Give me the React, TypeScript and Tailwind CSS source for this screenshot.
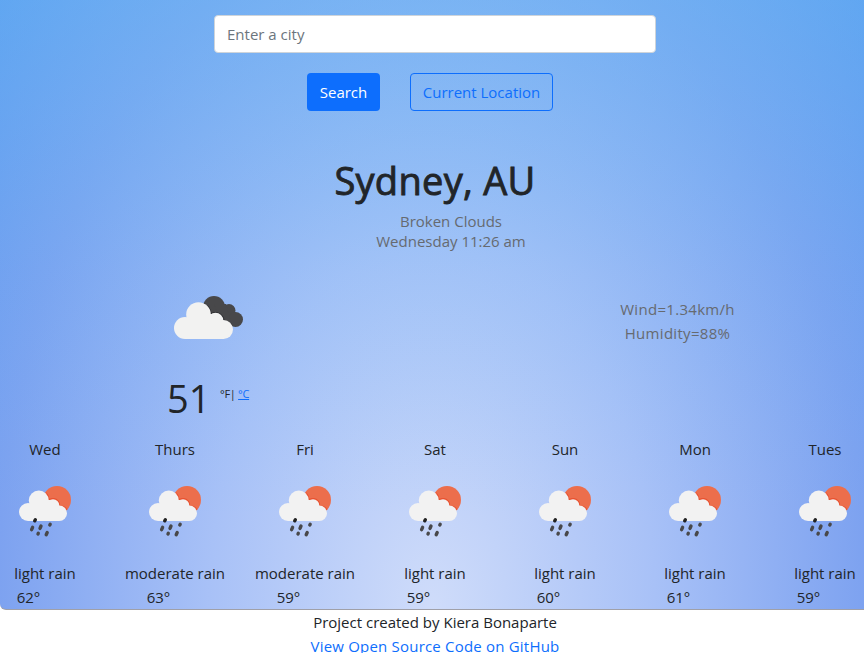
import React from "react";

const forecast = [
  { day: "Wed", text: "light rain", temp: "62°" },
  { day: "Thurs", text: "moderate rain", temp: "63°" },
  { day: "Fri", text: "moderate rain", temp: "59°" },
  { day: "Sat", text: "light rain", temp: "59°" },
  { day: "Sun", text: "light rain", temp: "60°" },
  { day: "Mon", text: "light rain", temp: "61°" },
  { day: "Tues", text: "light rain", temp: "59°" },
];

function BrokenClouds() {
  return (
    <svg width="70" height="44" viewBox="0 0 70 44" className="block">
      <g fill="#48484a">
        <circle cx="40" cy="11" r="11" />
        <circle cx="55" cy="14.500" r="6.500" />
        <circle cx="61.500" cy="23.500" r="7.500" />
        <path d="M40 8h12l6 22h-10z" />
      </g>
      <g fill="#2b2b2e">
        <path d="M30 7a13 13 0 0 1 7.500 10a9 9 0 0 1 13 8a10 10 0 0 1 8.500 5l-8 3-20-8z" />
      </g>
      <g fill="#f2f2f1">
        <circle cx="24.500" cy="18.500" r="12.300" />
        <circle cx="11" cy="32" r="11" />
        <circle cx="41.500" cy="24.500" r="7.800" />
        <circle cx="49.500" cy="33.500" r="9.500" />
        <path d="M11 24l8-6h20l8 10 3 15H11z" />
      </g>
    </svg>
  );
}

function RainSun() {
  return (
    <svg width="52" height="52" viewBox="0 0 52 52" className="block">
      <circle cx="38" cy="14" r="14" fill="#ec6e4c" />
      <path d="M27 6a10.500 10.500 0 0 1 3.500 7a7 7 0 0 1 10.500 6.500a8.500 8.500 0 0 1 7.500 4l-7 3-14-8z" fill="#e8502f" />
      <g fill="#f2f2f2">
        <circle cx="19.800" cy="14.500" r="10" />
        <circle cx="9" cy="26" r="9" />
        <circle cx="34" cy="19.500" r="6.300" />
        <circle cx="40.300" cy="27.300" r="7.700" />
        <path d="M9 19l6-5h17l8 9v12H9z" />
      </g>
      <g stroke="#48484a" strokeWidth="3.400" strokeLinecap="round">
        <path d="M16.300 33.800l-.6 1" stroke="#222" />
        <path d="M13.600 41.300l-1 2.400M22 40l-1 2.400M31.200 38.300l-.4.800M19.300 47.300l-.3.600M28.200 46.500l-1 2.200" />
      </g>
    </svg>
  );
}

export default function App() {
  return (
    <div
      className="h-[653px] w-full overflow-hidden bg-white text-[15px] leading-6 text-[#212529]"
      style={{ fontFamily: '"Open Sans", "Noto Sans", sans-serif' }}
    >
      <div className="h-[610px] overflow-hidden rounded-bl-md border-b border-[#a0a0a8] bg-[radial-gradient(620px_1000px_at_50%_100%,#cfdcfa_0%,#a8c1f7_36%,#7da2f0_70%,#5892ee_100%)]">
        <div className="h-full bg-[linear-gradient(to_top,#60c4f600_15%,#60c4f61c_55%,#60c4f65c_100%)]">
          <div className="-ml-5 w-[910px]">
            <div className="flex flex-col items-center pt-[15px]">
              <input
                placeholder="Enter a city"
                className="h-[38px] w-[442px] rounded border border-[#ced4da] bg-white px-3 text-[15px] outline-none placeholder:text-[#6c757d]"
              />
              <div className="mt-5 mr-[10px] flex gap-[30px]">
                <button className="h-[38px] w-[73px] rounded bg-[#0d6efd] text-white">Search</button>
                <button className="h-[38px] w-[143px] rounded border border-[#0d6efd] text-[#0d6efd]">Current Location</button>
              </div>
              <h1 className="mt-[45px] text-[38px] leading-[48px] tracking-[0.3px] font-medium [-webkit-text-stroke:0.9px_#212529]">
                Sydney, AU
              </h1>
              <div className="mt-[7px] ml-8 text-center leading-5 text-[#666a70]">
                <div>Broken Clouds</div>
                <div>Wednesday 11:26 am</div>
              </div>
            </div>
            <div className="mt-[45px] flex justify-between pr-[135px] pl-[187px]">
              <div className="w-[90px]">
                <div className="pl-[7px]">
                  <BrokenClouds />
                </div>
                <div className="mt-[34px] flex">
                  <span className="w-[53px] text-[38px] leading-[48px]">51</span>
                  <span className="pt-[11px] text-[11px] leading-[18px] tracking-[-0.3px] whitespace-nowrap">
                    °F| <a className="text-[#0d6efd] underline">°C</a>
                  </span>
                </div>
              </div>
              <div className="mt-px w-[155px] text-center tracking-[0.3px] text-[#666a70]">
                <div>Wind=1.34km/h</div>
                <div>Humidity=88%</div>
              </div>
            </div>
            <div className="mt-[15px] grid grid-cols-7 text-center">
              {forecast.map((f) => (
                <div key={f.day}>
                  <div>{f.day}</div>
                  <div className="flex h-[100px] justify-center pt-[25px]">
                    <RainSun />
                  </div>
                  <div>{f.text}</div>
                  <div className="pr-[33px]">{f.temp}</div>
                </div>
              ))}
            </div>
          </div>
        </div>
      </div>
      <footer className="-ml-5 w-[910px] text-center">
        <div>Project created by Kiera Bonaparte</div>
        <a className="tracking-[0.2px] text-[#0d6efd]">View Open Source Code on GitHub</a>
      </footer>
    </div>
  );
}
